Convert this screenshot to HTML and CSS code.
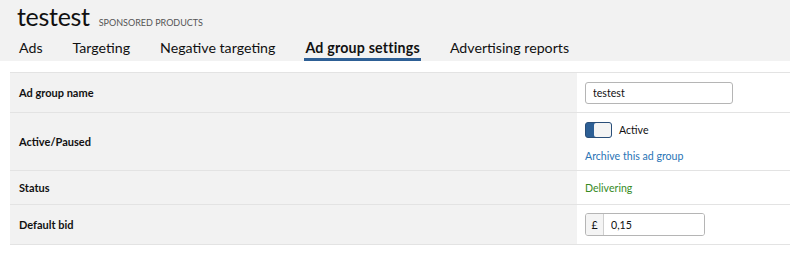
FILE: index.html
```html
<!DOCTYPE html>
<html lang="en">
<head>
    <meta charset="UTF-8">
    <title>Ad group settings</title>
    <link rel="stylesheet" href="styles.css">
</head>
<body>
    <div class="header">
        <div class="title-row">
            <h1>testest</h1>
            <span class="campaign-type">SPONSORED PRODUCTS</span>
        </div>
        <nav class="tabs">
            <a class="tab">Ads</a>
            <a class="tab">Targeting</a>
            <a class="tab">Negative targeting</a>
            <a class="tab active">Ad group settings</a>
            <a class="tab">Advertising reports</a>
        </nav>
    </div>

    <div class="settings">
        <div class="row row-name">
            <div class="label">Ad group name</div>
            <div class="value">
                <input class="text-input" type="text" value="testest">
            </div>
        </div>
        <div class="row row-state">
            <div class="label">Active/Paused</div>
            <div class="value">
                <div class="toggle-line">
                    <span class="toggle"><span class="knob"></span></span>
                    <span>Active</span>
                </div>
                <a class="archive">Archive this ad group</a>
            </div>
        </div>
        <div class="row row-status">
            <div class="label">Status</div>
            <div class="value"><span class="delivering">Delivering</span></div>
        </div>
        <div class="row row-bid">
            <div class="label">Default bid</div>
            <div class="value">
                <div class="money-input">
                    <span class="currency">£</span>
                    <input type="text" value="0,15">
                </div>
            </div>
        </div>
    </div>
</body>
</html>
```

FILE: styles.css
```css
body {
    margin: 0;
    font-family: Lato, "Noto Sans", sans-serif;
    color: #111;
    background: #fff;
}

.header {
    background: #f2f2f2;
    height: 61px;
    padding-left: 17px;
}

.title-row {
    display: flex;
    align-items: baseline;
    height: 37px;
}

h1 {
    margin: 0;
    font-size: 25px;
    font-weight: 400;
    line-height: 33px;
    letter-spacing: -0.3px;
}

.campaign-type {
    margin-left: 9px;
    font-size: 9px;
    color: #555;
}

.tabs {
    display: flex;
    gap: 30px;
    padding-left: 2px;
}

.tab {
    font-size: 14.2px;
    line-height: 21px;
    border-bottom: 3px solid transparent;
}

.tab.active {
    font-weight: 700;
    letter-spacing: 0.2px;
    margin: 0 -1px;
    padding: 0 1px;
    border-bottom-color: #2d5f95;
}

.settings {
    margin: 11px 0 0 10px;
    border-top: 1px solid #e3e3e3;
}

.row {
    display: flex;
    border-bottom: 1px solid #e3e3e3;
}

.label {
    width: 558px;
    background: #f2f2f2;
    padding-left: 9px;
    font-size: 11px;
    font-weight: 700;
    display: flex;
    align-items: center;
}

.value {
    flex: 1;
    padding-left: 8px;
    font-size: 10.6px;
    display: flex;
    flex-direction: column;
    justify-content: center;
}

.row-name { height: 39px; }
.row-state { height: 57px; }
.row-status { height: 33px; }
.row-bid { height: 39px; }

.text-input {
    width: 148px;
    height: 22px;
    box-sizing: border-box;
    border: 1px solid #b5b5b5;
    border-radius: 3px;
    padding: 0 7px;
    font: inherit;
    font-size: 10.6px;
    color: #111;
}

.toggle-line {
    display: flex;
    align-items: center;
    gap: 7px;
}

.toggle {
    width: 27px;
    height: 16px;
    box-sizing: border-box;
    border: 1px solid #2a4e78;
    border-radius: 3px;
    background: #2d5f95;
    display: flex;
    justify-content: flex-end;
}

.knob {
    width: 17px;
    height: 14px;
    background: #f4f4f4;
    border-radius: 2px;
}

.archive {
    margin-top: 12px;
    color: #2a74b5;
}

.delivering {
    color: #378b1f;
}

.money-input {
    display: flex;
    width: 120px;
    height: 23px;
    box-sizing: border-box;
    border: 1px solid #b5b5b5;
    border-radius: 3px;
    overflow: hidden;
}

.currency {
    width: 17px;
    background: #f4f4f4;
    border-right: 1px solid #cfcfcf;
    display: flex;
    align-items: center;
    justify-content: center;
}

.money-input input {
    flex: 1;
    border: none;
    padding: 0 7px;
    font: inherit;
    font-size: 10.6px;
    color: #111;
    outline: none;
    min-width: 0;
}
```
